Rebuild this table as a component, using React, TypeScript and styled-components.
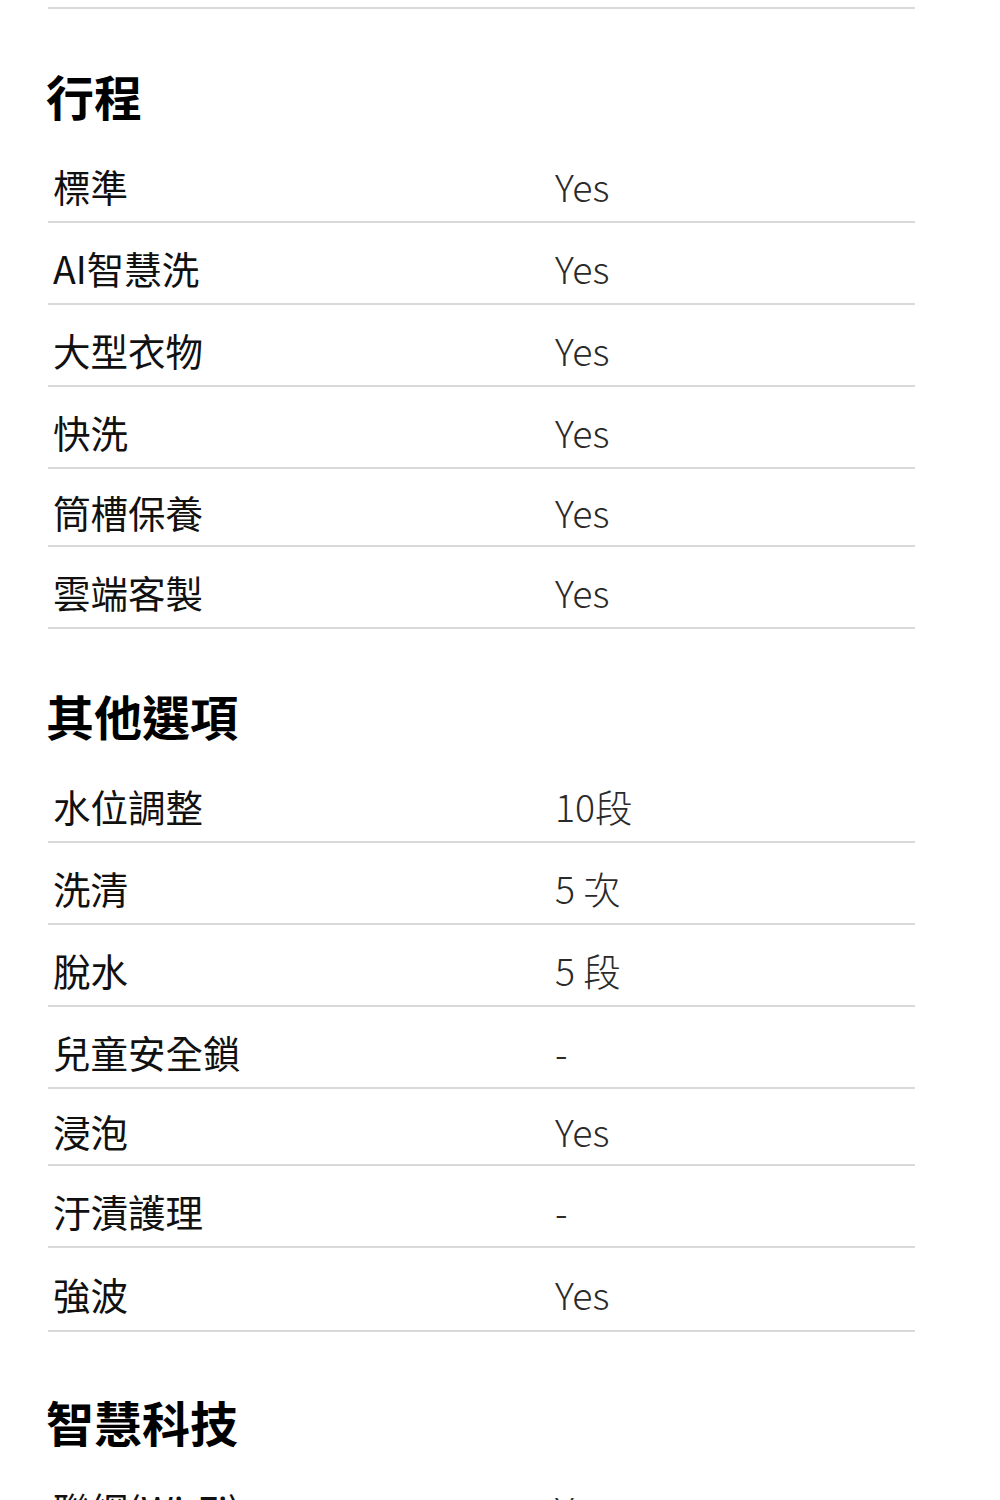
import React from "react"
import styled, { createGlobalStyle } from "styled-components"

const GlobalStyle = createGlobalStyle`
  html, body {
    margin: 0;
    padding: 0;
    background: #fff;
  }
  body {
    font-family: "Noto Sans CJK TC", "Noto Sans", sans-serif;
    color: #000;
  }
`

const Page = styled.div`
  width: 867px;
  margin-left: 48px;
  border-top: 2px solid #d9d9d9;
  margin-top: 7px;
`

const Section = styled.section`
  display: flex;
  flex-direction: column;
`

const Heading = styled.h2<{ shift?: number }>`
  margin: ${({ shift }) => 56 + (shift ?? 0)}px 0 ${({ shift }) => 16 - (shift ?? 0)}px -2px;
  height: 60px;
  line-height: 60px;
  font-size: 48px;
  font-weight: 700;
`

const SpecRow = styled.div<{ h: number }>`
  display: grid;
  grid-template-columns: 502px 1fr;
  align-items: center;
  box-sizing: border-box;
  height: ${({ h }) => h}px;
  padding-top: 8px;
  border-bottom: 2px solid #d9d9d9;
`

const Label = styled.span`
  padding-left: 5px;
  font-size: 37.5px;
  font-weight: 400;
  color: #111;
`

const Value = styled.span`
  padding-left: 5px;
  font-family: "Noto Sans CJK TC Light", "Noto Sans CJK TC DemiLight", "Noto Sans CJK TC", sans-serif;
  font-size: 37.5px;
  font-weight: 300;
  color: #2a2a2a;
`

type Spec = [string, string, number?]

const sections: { title: string; shift?: number; rows: Spec[] }[] = [
  {
    title: "行程",
    rows: [
      ["標準", "Yes"],
      ["AI智慧洗", "Yes"],
      ["大型衣物", "Yes"],
      ["快洗", "Yes"],
      ["筒槽保養", "Yes", 78],
      ["雲端客製", "Yes"],
    ],
  },
  {
    title: "其他選項",
    rows: [
      ["水位調整", "10段"],
      ["洗清", "5 次"],
      ["脫水", "5 段"],
      ["兒童安全鎖", "-"],
      ["浸泡", "Yes", 77],
      ["汙漬護理", "-"],
      ["強波", "Yes", 84],
    ],
  },
  {
    title: "智慧科技",
    shift: 3,
    rows: [["聯網(Wi-Fi)", "Yes"]],
  },
]

const App = () => {
  return (
    <>
      <GlobalStyle />
      <Page>
        {sections.map((s) => (
          <Section key={s.title}>
            <Heading shift={s.shift}>{s.title}</Heading>
            {s.rows.map(([label, value, h]) => (
              <SpecRow key={label} h={h ?? 82}>
                <Label>{label}</Label>
                <Value>{value}</Value>
              </SpecRow>
            ))}
          </Section>
        ))}
      </Page>
    </>
  )
}

export default App
